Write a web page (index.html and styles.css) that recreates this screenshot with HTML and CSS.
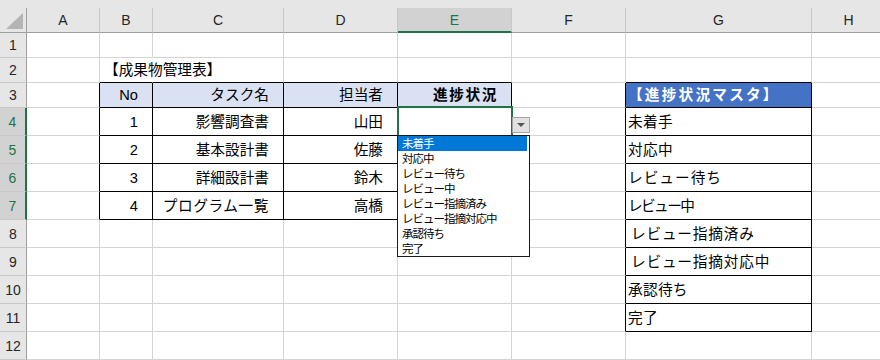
FILE: index.html
```html
<!DOCTYPE html>
<html lang="ja">
  <head>
    <meta charset="utf-8" />
    <title>成果物管理表</title>
    <link rel="stylesheet" href="styles.css">
  </head>
  <body>
    <div class="sheet">
      <div class="band"></div>

      <!-- column headers -->
      <div class="row hdr">
        <div class="corner">
          <svg width="17" height="16" viewBox="0 0 17 16"><polygon points="0,16 17,16 17,0" fill="#b4b4b4"/></svg>
        </div>
        <div class="ch">A</div>
        <div class="ch">B</div>
        <div class="ch">C</div>
        <div class="ch">D</div>
        <div class="ch on">E</div>
        <div class="ch">F</div>
        <div class="ch">G</div>
        <div class="ch">H</div>
      </div>

      <!-- row 1 -->
      <div class="row r25">
        <div class="rh">1</div>
        <div></div><div></div><div></div><div></div><div></div><div></div><div></div><div></div>
      </div>

      <!-- row 2 -->
      <div class="row r25">
        <div class="rh">2</div>
        <div></div>
        <div class="title bk-b ovf">【成果物管理表】</div>
        <div class="bk-b"></div>
        <div class="bk-b"></div>
        <div class="bk-b"></div>
        <div></div>
        <div class="bk-b"></div>
        <div></div>
      </div>

      <!-- row 3 -->
      <div class="row r25">
        <div class="rh">3</div>
        <div class="bk-r"></div>
        <div class="bk th right">No</div>
        <div class="bk th right">タスク名</div>
        <div class="bk th right">担当者</div>
        <div class="bk th right strong">進捗状況</div>
        <div class="bk-r"></div>
        <div class="bk mh">【進捗状況マスタ】</div>
        <div></div>
      </div>

      <!-- row 4 -->
      <div class="row r28">
        <div class="rh on">4</div>
        <div class="bk-r"></div>
        <div class="bk right">1</div>
        <div class="bk right">影響調査書</div>
        <div class="bk right">山田</div>
        <div class="bk"></div>
        <div class="bk-r"></div>
        <div class="bk item">未着手</div>
        <div></div>
      </div>

      <!-- row 5 -->
      <div class="row r28">
        <div class="rh on">5</div>
        <div class="bk-r"></div>
        <div class="bk right">2</div>
        <div class="bk right">基本設計書</div>
        <div class="bk right">佐藤</div>
        <div class="bk"></div>
        <div class="bk-r"></div>
        <div class="bk item">対応中</div>
        <div></div>
      </div>

      <!-- row 6 -->
      <div class="row r28">
        <div class="rh on">6</div>
        <div class="bk-r"></div>
        <div class="bk right">3</div>
        <div class="bk right">詳細設計書</div>
        <div class="bk right">鈴木</div>
        <div class="bk"></div>
        <div class="bk-r"></div>
        <div class="bk item wide">レビュー待ち</div>
        <div></div>
      </div>

      <!-- row 7 -->
      <div class="row r28">
        <div class="rh on">7</div>
        <div class="bk-r"></div>
        <div class="bk right">4</div>
        <div class="bk right spaced">プログラム一覧</div>
        <div class="bk right">高橋</div>
        <div class="bk"></div>
        <div class="bk-r"></div>
        <div class="bk item narrow">レビュー中</div>
        <div></div>
      </div>

      <!-- row 8 -->
      <div class="row r28">
        <div class="rh">8</div>
        <div></div><div></div><div></div><div></div><div></div>
        <div class="bk-r"></div>
        <div class="bk item indent">レビュー指摘済み</div>
        <div></div>
      </div>

      <!-- row 9 -->
      <div class="row r28">
        <div class="rh">9</div>
        <div></div><div></div><div></div><div></div><div></div>
        <div class="bk-r"></div>
        <div class="bk item indent">レビュー指摘対応中</div>
        <div></div>
      </div>

      <!-- row 10 -->
      <div class="row r28">
        <div class="rh">10</div>
        <div></div><div></div><div></div><div></div><div></div>
        <div class="bk-r"></div>
        <div class="bk item">承認待ち</div>
        <div></div>
      </div>

      <!-- row 11 -->
      <div class="row r28">
        <div class="rh">11</div>
        <div></div><div></div><div></div><div></div><div></div>
        <div class="bk-r"></div>
        <div class="bk item">完了</div>
        <div></div>
      </div>

      <!-- row 12 -->
      <div class="row r28">
        <div class="rh">12</div>
        <div></div><div></div><div></div><div></div><div></div><div></div><div></div><div></div>
      </div>

      <!-- row 13, only its top edge shows -->
      <div class="row r28">
        <div class="rh"></div>
        <div></div><div></div><div></div><div></div><div></div><div></div><div></div><div></div>
      </div>

      <!-- selection, validation button and list lie over the grid -->
      <div class="selection"></div>
      <div class="dropbtn"><span class="tri"></span></div>
      <ul class="droplist">
        <li class="picked">未着手</li>
        <li>対応中</li>
        <li>レビュー待ち</li>
        <li>レビュー中</li>
        <li>レビュー指摘済み</li>
        <li>レビュー指摘対応中</li>
        <li>承認待ち</li>
        <li>完了</li>
      </ul>
    </div>
  </body>
</html>
```
FILE: styles.css
```css
body {margin: 0;
      background-color: #ffffff;
      overflow: hidden;
      font-family: "Liberation Sans", "Noto Sans CJK JP", sans-serif;
      color: #000000;}

.sheet {position: relative;
        width: 885px;}

.band {height: 8px;
       background-color: #e6e6e6;}

/* every sheet row shares the same column widths */
.row {display: grid;
      grid-template-columns: 27px 73px 53px 131px 114px 114px 114px 186px 74px;}

.row > div {box-sizing: border-box;
            display: flex;
            align-items: center;
            white-space: nowrap;
            padding: 0 2px;
            font-size: 14.67px;
            line-height: 18px;
            border-right: 1px solid #d4d4d4;
            border-bottom: 1px solid #d4d4d4;}

.hdr {height: 25px;}
.r25 {height: 25px;}
.r28 {height: 28px;}

.hdr > div {background-color: #e6e6e6;
            border-right-color: #c8c8c8;
            border-bottom-color: #9e9e9e;
            justify-content: center;
            font-size: 14px;
            color: #262626;}

.hdr > .corner {border-right-color: #9e9e9e;
                justify-content: flex-end;
                align-items: flex-end;
                padding: 0 3px 3px 0;}

.hdr > .ch.on {background-color: #d2d2d2;
               color: #217346;
               border-bottom: 2px solid #217346;}

.row > .rh {background-color: #e6e6e6;
            border-right-color: #9e9e9e;
            border-bottom-color: #c8c8c8;
            justify-content: center;
            padding: 0;
            font-size: 14px;
            color: #262626;}

.row > .rh.on {background-color: #d2d2d2;
               color: #217346;
               border-right: 2px solid #217346;}

/* table borders */
.row > .bk-b {border-bottom-color: #000000;}
.row > .bk-r {border-right-color: #000000;}
.row > .bk {border-right-color: #000000;
            border-bottom-color: #000000;}
.row > .ovf {border-right-color: transparent;}

.title {overflow: visible;}
.row > .title {padding-left: 4px;}

.th {background-color: #d9e1f2;}
.right {justify-content: flex-end;}
.row > .right {padding-right: 14px;}
.row > .strong {font-weight: bold;
                letter-spacing: 1.6px;
                padding-right: 13px;}
.spaced {letter-spacing: 0.6px;}

.row > .mh {background-color: #4472c4;
            color: #ffffff;
            font-weight: bold;
            letter-spacing: 2.2px;}

.item {letter-spacing: 0.3px;}
.wide {letter-spacing: 1px;}
.narrow {letter-spacing: -1.6px;}
.row > .indent {padding-left: 5px;
                letter-spacing: 0.8px;}

/* overlays */
.selection {position: absolute;
            left: 397px;
            top: 106px;
            width: 116px;
            height: 115px;
            box-sizing: border-box;
            border: 2px solid #217346;}

.dropbtn {position: absolute;
          left: 512px;
          top: 117px;
          width: 18px;
          height: 16px;
          box-sizing: border-box;
          background-color: #e1e1e1;
          border: 1px solid #a6a6a6;
          display: flex;
          align-items: center;
          justify-content: center;}

.tri {width: 0;
      height: 0;
      border-left: 4px solid transparent;
      border-right: 4px solid transparent;
      border-top: 4px solid #555555;}

.droplist {position: absolute;
           left: 397px;
           top: 135px;
           width: 133px;
           margin: 0;
           padding: 0;
           list-style: none;
           box-sizing: border-box;
           background-color: #ffffff;
           border: 1px solid #1a1a1a;}

.droplist li {height: 15px;
              line-height: 15px;
              padding-left: 4px;
              margin-right: 2px;
              font-family: "Noto Sans CJK JP", sans-serif;
              font-size: 11.5px;
              letter-spacing: -1px;
              white-space: nowrap;}

.droplist .picked {background-color: #0078d7;
                   color: #ffffff;}
```
